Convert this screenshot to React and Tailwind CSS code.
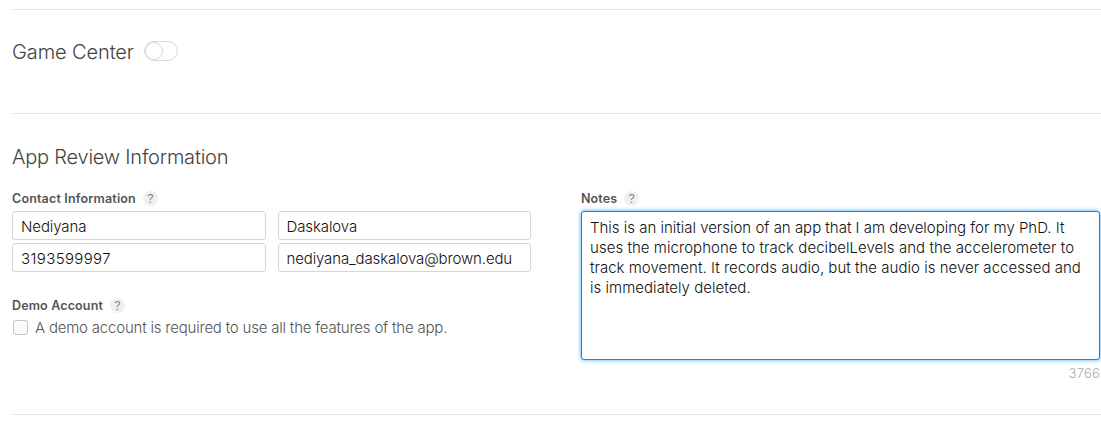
import React from "react";

function Help() {
  return (
    <span className="flex size-[15px] items-center justify-center rounded-full bg-[#f0f0f3] text-[12px] leading-[15px] font-light tracking-normal text-[#66666a]">
      ?
    </span>
  );
}

function Label({ children, track }) {
  return (
    <div className="flex h-[15px] items-center gap-[7px]">
      <span className={`text-[12.5px] leading-[15px] font-semibold text-[#555] ${track}`}>{children}</span>
      <Help />
    </div>
  );
}

function Field({ value, track }) {
  return (
    <input
      type="text"
      readOnly
      value={value}
      className={`h-[29px] w-full min-w-0 rounded-[3px] border border-[#d6d6d6] bg-white pr-2 pt-px text-[15px] font-light text-[#111] outline-none ${track}`}
    />
  );
}

export default function App() {
  return (
    <div className="h-[430px] w-[1101px] overflow-hidden bg-white pl-3 pt-[9px] font-['Inter','Liberation_Sans',sans-serif]">
      <section className="flex h-[104px] items-start border-t border-[#e3e3e3] pt-[28px]">
        <h2 className="w-[132px] text-[20px] leading-[28px] font-light tracking-[-0.1px] whitespace-nowrap text-[#444]">Game Center</h2>
        <span className="mt-[3px] flex h-5 w-[34px] rounded-full border border-[#d8d8d8] bg-white">
          <span className="size-[18px] rounded-full border border-[#d8d8d8] bg-white" />
        </span>
      </section>

      <section className="h-[301px] border-t border-[#e3e3e3] pt-[29px]">
        <h2 className="text-[20px] leading-[28px] font-light tracking-[-0.22px] text-[#444]">App Review Information</h2>
        <div className="mt-[20px] flex">
          <div className="w-[519px]">
            <Label track="tracking-[0.17px]">Contact Information</Label>
            <div className="mt-[5px] grid grid-cols-[254px_253px] gap-x-3 gap-y-[3px]">
              <Field value="Nediyana" track="pl-2 tracking-[-0.1px]" />
              <Field value="Daskalova" track="pl-[7.5px] tracking-[-0.1px]" />
              <Field value="3193599997" track="pl-2 tracking-[0.38px]" />
              <Field value="nediyana_daskalova@brown.edu" track="pl-[7.5px] tracking-[-0.13px]" />
            </div>
            <div className="mt-[26px]">
              <Label track="tracking-[0.15px]">Demo Account</Label>
            </div>
            <div className="mt-[5px] flex h-5 items-center pl-px">
              <span className="mb-px size-[15px] rounded-[3px] border border-[#c4c4c4] bg-[#fafafa]" />
              <span className="ml-[7px] text-[15px] leading-5 font-light tracking-[-0.205px] whitespace-nowrap text-[#555]">
                A demo account is required to use all the features of the app.
              </span>
            </div>
          </div>
          <div className="ml-[50px] w-[519px]">
            <Label track="tracking-[0.1px]">Notes</Label>
            <div className="mt-[5px] h-[149px] rounded-[3px] border border-[#0b84f5] bg-white px-2 pt-[6px] text-[15px] leading-5 font-light whitespace-nowrap text-[#111] shadow-[0_0_4px_0_#0b95ffcc]">
              <div className="tracking-[-0.01px]">This is an initial version of an app that I am developing for my PhD. It</div>
              <div className="tracking-[0.045px]">uses the microphone to track decibelLevels and the accelerometer to</div>
              <div className="tracking-[0.02px]">track movement. It records audio, but the audio is never accessed and</div>
              <div className="tracking-[0.03px]">is immediately deleted.</div>
            </div>
            <div className="mt-[4px] text-right text-[13px] leading-[18px] font-light tracking-[0.2px] text-[#aaa]">3766</div>
          </div>
        </div>
      </section>
      <div className="border-t border-[#e3e3e3]" />
    </div>
  );
}
